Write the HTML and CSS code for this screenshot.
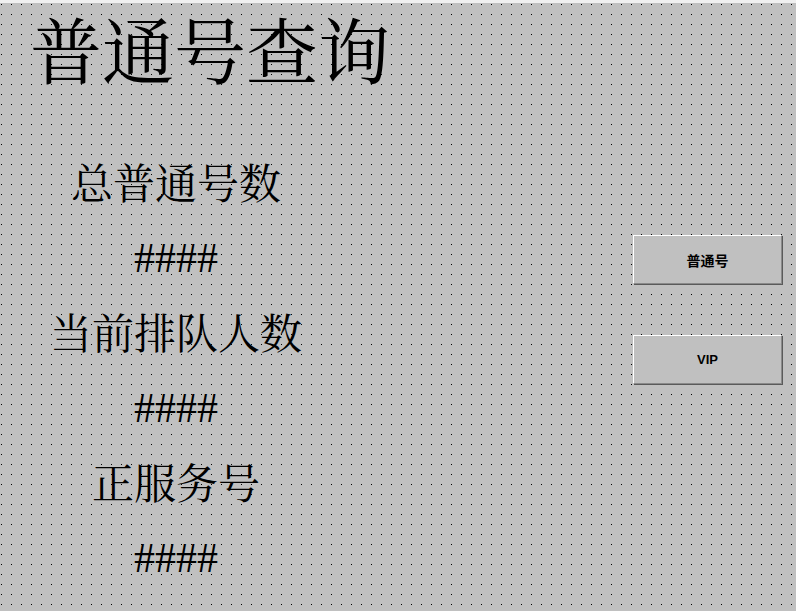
FILE: index.html
```html
<!DOCTYPE html>
<html lang="zh-CN">
<head>
<meta charset="utf-8">
<title>普通号查询</title>
<link rel="stylesheet" href="styles.css">
</head>
<body>
<div class="topband"></div>
<main class="canvas">
  <h1 class="title">普通号查询</h1>
  <div class="content">
    <section class="stats">
      <div class="group">
        <div class="label">总普通号数</div>
        <div class="value">####</div>
      </div>
      <div class="group">
        <div class="label">当前排队人数</div>
        <div class="value">####</div>
      </div>
      <div class="group">
        <div class="label">正服务号</div>
        <div class="value">####</div>
      </div>
    </section>
    <section class="actions">
      <button class="btn btn-cjk" type="button">普通号</button>
      <button class="btn" type="button">VIP</button>
    </section>
  </div>
</main>
</body>
</html>
```

FILE: styles.css
```css
html, body {
  margin: 0;
  padding: 0;
}

body {
  width: 796px;
  height: 611px;
  overflow: hidden;
  background: #f0f0f0;
}

.topband {
  height: 3px;
  background: #f0f0f0;
}

.canvas {
  height: 608px;
  background-color: #c0c0c0;
  background-image: conic-gradient(from 270deg at 1px 1px, #000 90deg, transparent 0);
  background-size: 10px 10px;
  background-position: 1px 1px;
  display: flex;
  flex-direction: column;
}

.title {
  margin: 4px 0 0 30px;
  font-family: "Noto Serif CJK SC", "Noto Sans CJK SC", serif;
  font-weight: normal;
  font-size: 72px;
  line-height: 80px;
  color: #000;
}

.content {
  display: flex;
  align-items: flex-start;
  margin-top: 73px;
  padding-right: 14px;
}

.stats {
  width: 352px;
  display: flex;
  flex-direction: column;
  gap: 31px;
  text-align: center;
  color: #000;
}

.group {
  display: flex;
  flex-direction: column;
  gap: 35px;
}

.label {
  font-family: "Noto Serif CJK SC", "Noto Sans CJK SC", serif;
  font-size: 42px;
  line-height: 42px;
  white-space: nowrap;
}

.value {
  font-family: "Liberation Serif", serif;
  font-size: 42px;
  line-height: 42px;
}

.actions {
  margin-left: auto;
  padding-top: 75px;
  display: flex;
  flex-direction: column;
  gap: 51px;
}

.btn {
  width: 149px;
  height: 49px;
  margin: 0;
  padding: 0;
  background: #c0c0c0;
  border-style: solid;
  border-width: 1px;
  border-color: #ffffff #8a8a8a #8a8a8a #ffffff;
  box-shadow: 1px 1px 0 #5a5a5a;
  font-family: "Liberation Sans", Arial, sans-serif;
  font-weight: bold;
  font-size: 13px;
  color: #000;
}

.btn-cjk {
  font-family: "Noto Sans CJK SC", sans-serif;
  font-size: 14px;
}
```
